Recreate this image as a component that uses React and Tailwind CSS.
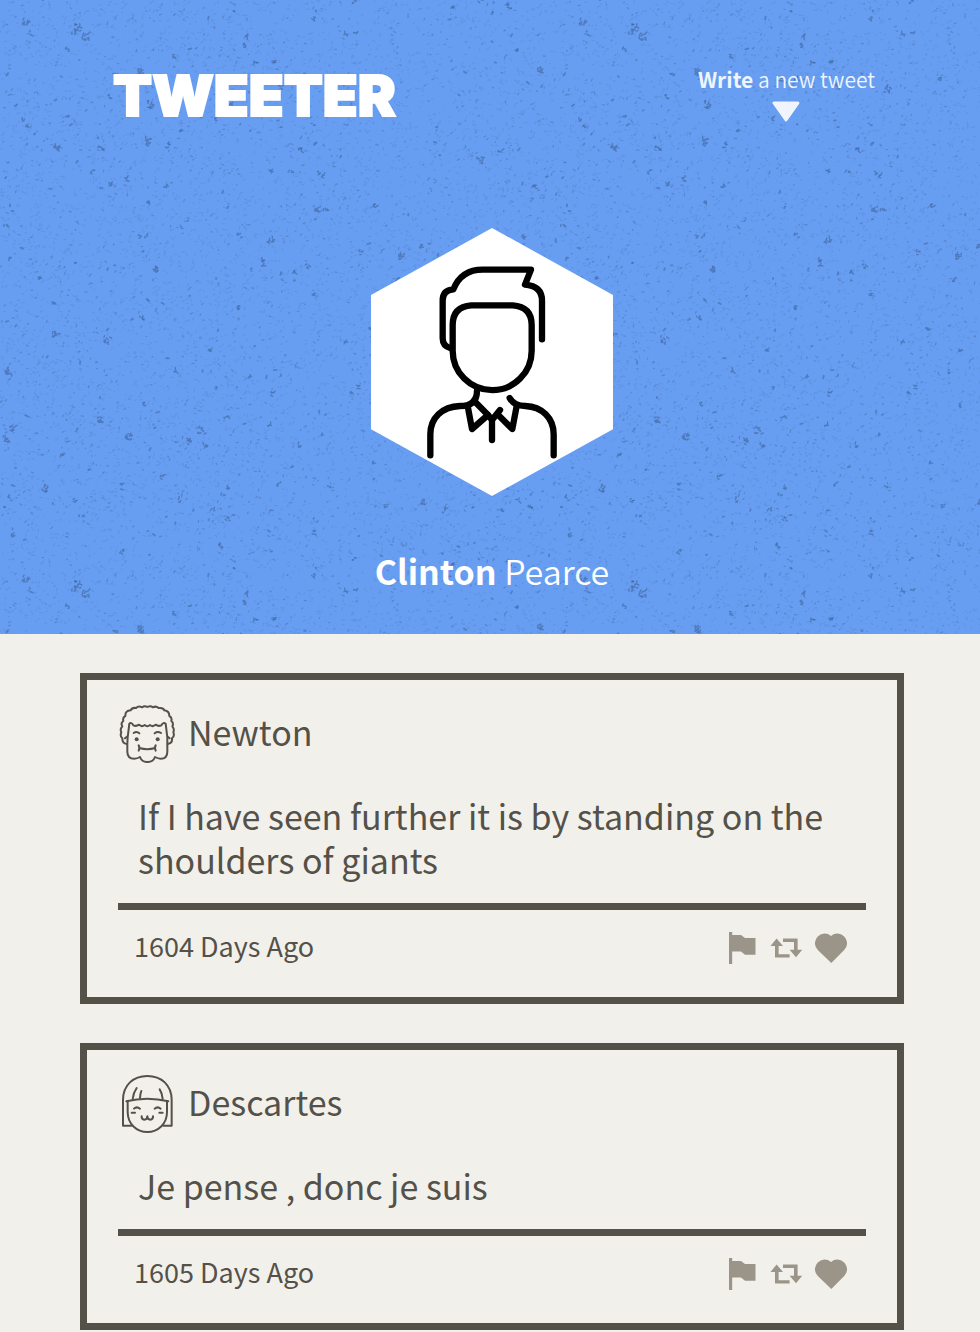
import React from "react";

const TILE = 557;

const BLOTCHES = [
  [57, 147], [13, 429], [6, 440], [128, 437], [55, 334], [8, 371], [107, 340], [44, 489], [201, 431],
  [188, 441], [155, 269], [317, 209], [141, 76], [77, 28], [401, 257], [546, 266], [480, 160], [25, 580],
  [85, 594], [140, 630], [270, 240], [330, 90], [100, 420], [540, 70],
];

function buildSpeckles() {
  let seed = 91;
  const rand = () => {
    seed = (seed * 1664525 + 1013904223) % 4294967296;
    return seed / 4294967296;
  };
  const segment = (x, y, len) => {
    const angle = rand() * 2.4 - 1.6;
    return `M${x.toFixed(1)} ${y.toFixed(1)}l${(Math.cos(angle) * len).toFixed(1)} ${(Math.sin(angle) * len).toFixed(1)}`;
  };
  const dashes = (n, min, max) => {
    let d = "";
    for (let i = 0; i < n; i++) {
      d += segment(rand() * TILE, rand() * TILE, min + rand() * (max - min));
    }
    return d;
  };
  const cluster = (x, y, count, radius) => {
    let d = "";
    for (let i = 0; i < count; i++) {
      d += segment(x + (rand() - 0.5) * radius * 2, y + (rand() - 0.5) * radius * 2, 1 + rand() * 1.5);
    }
    return d;
  };
  let clusters = BLOTCHES.map(([x, y]) => cluster(x, y % TILE, 10, 3.2)).join("");
  for (let i = 0; i < 110; i++) {
    clusters += cluster(rand() * TILE, rand() * TILE, 4, 2);
  }
  return {
    faint: dashes(6500, 0.5, 3),
    medium: dashes(1500, 0.4, 2.4),
    strong: dashes(150, 0.8, 3),
    clusters,
  };
}

const SPECKLES = buildSpeckles();

function Texture() {
  return (
    <svg className="absolute inset-0 h-full w-full" aria-hidden="true">
      <defs>
        <pattern id="speckles" width={TILE} height={TILE} patternUnits="userSpaceOnUse">
          <g fill="none" stroke="#2c4878" strokeLinecap="round">
            <path d={SPECKLES.faint} strokeWidth="1.2" opacity="0.13" />
            <path d={SPECKLES.medium} strokeWidth="1.3" opacity="0.28" />
            <path d={SPECKLES.strong} strokeWidth="1.9" opacity="0.36" />
            <path d={SPECKLES.clusters} strokeWidth="1.4" opacity="0.42" />
          </g>
        </pattern>
      </defs>
      <rect width="100%" height="100%" fill="url(#speckles)" />
    </svg>
  );
}

function ProfilePicture() {
  return (
    <svg viewBox="33 24 726 804" className="h-[268px] w-[242px]" role="img" aria-label="Profile picture">
      <path d="M396 24L759 225V628L396 828L33 628V225Z" fill="#fff" />
      <g fill="none" stroke="#000" strokeWidth="19" strokeLinecap="round" strokeLinejoin="round">
        <path d="M334 256H458Q515 260 515 315V392A118 118 0 0 1 278 392V315Q278 260 334 256Z" />
        <path d="M272 385Q248 378 248 355V242Q248 210 280 208Q304 149 368 149H513L495 194Q546 198 546 242V358" />
        <path d="M351 512Q351 558 300 558C246 560 211 594 211 643V706" />
        <path d="M342 542L384 585L336 627L323 558" />
        <path d="M384 585L396 600L420 570M396 597V660" />
        <path d="M414 584L457 627L470 558" />
        <path d="M449 534Q462 558 496 558C546 560 581 594 581 643V706" />
      </g>
    </svg>
  );
}

function NewtonFace() {
  return (
    <svg viewBox="147 135 168 180" className="h-[60px] w-14 shrink-0" aria-hidden="true">
      <g fill="none" stroke="#545149" strokeWidth="6" strokeLinecap="round" strokeLinejoin="round">
        <path d="M171 252Q156 250 157 235Q149 228 154 217Q149 207 157 199Q151 189 160 183Q157 172 166 168Q165 152 182 151Q186 142 198 144Q206 136 216 142Q224 136 232 141Q241 136 249 142Q258 137 266 144Q280 142 283 151Q298 153 298 168Q307 172 304 183Q312 189 307 199Q314 207 310 217Q315 228 306 235Q308 250 293 252" />
        <path d="M172 252L173 232L178 191Q184 185 190 196Q199 200 207 194Q215 202 224 195Q232 202 240 195Q249 202 257 194Q265 200 274 196Q280 185 287 191L292 232V275Q292 296 272 296Q264 296 255 291Q249 307 232 306Q216 307 210 291Q202 296 193 296Q172 296 172 275Z" />
        <path d="M171 230L165 235M293 230L299 235" />
        <path d="M191 219Q200 213 208 220M254 220Q263 213 273 219" />
        <path d="M206 256Q210 262 206 272M257 256Q253 262 257 272M208 264Q232 271 255 264" />
      </g>
      <circle cx="200" cy="238" r="6" fill="#545149" />
      <circle cx="263" cy="238" r="6" fill="#545149" />
    </svg>
  );
}

function DescartesFace() {
  return (
    <svg viewBox="147 135 168 180" className="h-[60px] w-14 shrink-0" aria-hidden="true">
      <g fill="none" stroke="#545149" strokeWidth="6" strokeLinecap="round" strokeLinejoin="round">
        <path d="M184 287H159V210C159 165 190 138 232 138S305 165 305 210V287H280" />
        <path d="M169 214Q232 198 295 214" />
        <path d="M173 214V246C173 282 200 306 232 306S291 282 291 246V214" />
        <path d="M200 174Q190 188 188 207M214 183Q210 193 210 204M269 178Q277 190 278 207" />
        <path d="M192 236Q200 228 210 236M254 236Q263 228 272 236" />
        <path d="M185 248H195M268 248H278" />
        <path d="M215 259Q214 268 223 269Q232 269 232 259Q232 269 241 269Q250 268 249 259" />
      </g>
    </svg>
  );
}

function FlagIcon() {
  return (
    <svg viewBox="0 0 28 32" className="h-8 w-7" fill="#9b9589" aria-hidden="true">
      <path d="M0 0H3.2V3H12L16 6H26.5V22.7H16L12 19.6H3.2V32H0Z" />
    </svg>
  );
}

function RetweetIcon() {
  return (
    <svg viewBox="0 0 32 20" className="h-5 w-8" fill="#9b9589" aria-hidden="true">
      <path d="M6.6 0.5L13 8H8.6V16.3H19.6V19.6H5V8H0.5Z" />
      <path d="M13 0.6H27.6V11.7H32.3L26 19.3L19.6 11.7H24V4H13Z" />
    </svg>
  );
}

function HeartIcon() {
  return (
    <svg viewBox="0 0 32 30" className="h-[30px] w-8" fill="#9b9589" aria-hidden="true">
      <path d="M16 2.9A9.7 9.7 0 0 1 29.2 17.1L16.3 30L2.8 17.1A9.7 9.7 0 0 1 16 2.9Z" />
    </svg>
  );
}

function Tweet({ face, name, text, age }) {
  return (
    <article className="border-[7px] border-[#545149] px-[31px] pt-[25px] pb-[33px]">
      <header className="flex items-start gap-[13px] pl-px">
        {face}
        <h2 className="leading-[54px]">{name}</h2>
      </header>
      <p className="mt-[29px] px-5 pb-[21px] leading-[44px]">{text}</p>
      <footer className="flex items-start justify-between border-t-[7px] border-[#545149] pt-[22px] pr-[19px] pl-4">
        <span className="text-[27px] leading-7">{age}</span>
        <div className="flex items-center gap-[13px]">
          <button type="button" aria-label="Flag">
            <FlagIcon />
          </button>
          <button type="button" aria-label="Retweet">
            <RetweetIcon />
          </button>
          <button type="button" aria-label="Like">
            <HeartIcon />
          </button>
        </div>
      </footer>
    </article>
  );
}

export default function App() {
  return (
    <div className="min-h-screen bg-[#f2f0eb] pb-px font-['Noto_Sans_CJK_SC',sans-serif] text-[34px] text-[#545149]">
      <header className="relative bg-[#679ef2] text-white">
        <Texture />
        <div className="relative flex flex-col items-center pb-[38px] pl-1">
          <nav className="flex w-full items-start justify-between pt-[65px] pr-[105px] pl-[109px]">
            <a
              href="#home"
              className="font-['Inter',sans-serif] text-[57px] leading-[62px] font-black [-webkit-text-stroke:2px_white]"
            >
              TWEETER
            </a>
            <button type="button" className="flex flex-col items-center text-[21px] leading-7 font-[350] opacity-90">
              <span>
                <strong className="font-bold">Write</strong> a new tweet
              </span>
              <svg viewBox="0 0 28 21" className="mt-2 h-[21px] w-7" aria-hidden="true">
                <path d="M2 2H26L14 19Z" fill="#fff" stroke="#fff" strokeWidth="3" strokeLinejoin="round" />
              </svg>
            </button>
          </nav>
          <div className="mt-[101px]">
            <ProfilePicture />
          </div>
          <h1 className="mt-[50px] leading-[50px] font-[350]">
            <strong className="font-bold">Clinton</strong> Pearce
          </h1>
        </div>
      </header>
      <main className="flex flex-col gap-[39px] pt-[39px] pr-[76px] pl-20">
        <Tweet
          face={<NewtonFace />}
          name="Newton"
          text="If I have seen further it is by standing on the shoulders of giants"
          age="1604 Days Ago"
        />
        <Tweet face={<DescartesFace />} name="Descartes" text="Je pense , donc je suis" age="1605 Days Ago" />
      </main>
    </div>
  );
}
